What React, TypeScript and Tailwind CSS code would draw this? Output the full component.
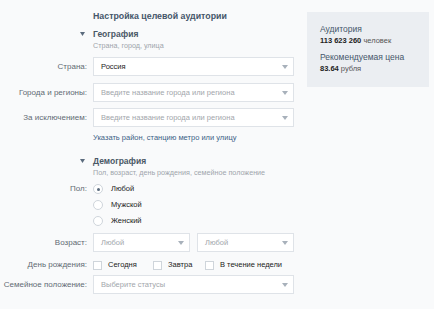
import React from "react";

const font = { fontFamily: '"Liberation Sans", Arial, sans-serif' };

const Caret = () => (
  <svg width="6" height="4" viewBox="0 0 6 4" className="shrink-0">
    <path d="M0 0 L6 0 L3 4 Z" fill="#a8b1bb" />
  </svg>
);

const Select = ({ text, placeholder = false, width = "w-[201px]" }: { text: string; placeholder?: boolean; width?: string }) => (
  <div className={`${width} h-[19px] flex items-center justify-between bg-white border border-[#dfe3e8] pl-[7px] pr-[5px]`}>
    <span className={`text-[7.5px] ${placeholder ? "text-[#a2a6ab]" : "text-[#222]"}`}>{text}</span>
    <Caret />
  </div>
);

const Row = ({ label, children, className = "" }: { label: string; children: React.ReactNode; className?: string }) => (
  <div className={`flex items-center ${className}`}>
    <div className="w-[88px] pr-[1px] text-right text-[8px] text-[#626a73]">{label}</div>
    <div className="ml-[5px] flex items-center">{children}</div>
  </div>
);

const Section = ({ title, sub }: { title: string; sub: string }) => (
  <div className="ml-[80px]">
    <div className="flex items-center h-[12px]">
      <svg width="5" height="4" viewBox="0 0 5 4" className="mr-[8px]">
        <path d="M0 0 L5 0 L2.5 4 Z" fill="#5b6b7d" />
      </svg>
      <span className="text-[8.5px] font-bold text-[#4a5866]">{title}</span>
    </div>
    <div className="ml-[13px] text-[7.2px] text-[#a0a5ab] leading-[12px]">{sub}</div>
  </div>
);

const Radio = ({ label, checked = false }: { label: string; checked?: boolean }) => (
  <div className="flex items-center h-[16px]">
    <div className="w-[10px] h-[10px] rounded-full border border-[#cfd5db] bg-white flex items-center justify-center">
      {checked && <div className="w-[3px] h-[3px] rounded-full bg-[#5b6b7d]" />}
    </div>
    <span className="ml-[8px] text-[7.5px] text-[#222]">{label}</span>
  </div>
);

const Check = ({ label }: { label: string }) => (
  <div className="flex items-center">
    <div className="w-[9px] h-[9px] border border-[#cfd5db] bg-white" />
    <span className="ml-[6px] text-[7.5px] text-[#222]">{label}</span>
  </div>
);

export default function App() {
  return (
    <div style={font} className="w-[434px] h-[309px] bg-[#f9fafb] overflow-hidden flex">
      <div className="w-[300px] flex flex-col">
        <div className="ml-[93px] mt-[11px] h-[12px] flex items-center text-[8.8px] font-bold text-[#45566a]">
          Настройка целевой аудитории
        </div>
        <div className="mt-[5px]">
          <Section title="География" sub="Страна, город, улица" />
        </div>
        <Row label="Страна:" className="mt-[5px]">
          <Select text="Россия" />
        </Row>
        <Row label="Города и регионы:" className="mt-[7px]">
          <Select text="Введите название города или региона" placeholder />
        </Row>
        <Row label="За исключением:" className="mt-[6px]">
          <Select text="Введите название города или региона" placeholder />
        </Row>
        <div className="ml-[93px] mt-[5px] text-[7.5px] text-[#3b5f86] leading-[12px]">
          Указать район, станцию метро или улицу
        </div>
        <div className="mt-[11px]">
          <Section title="Демография" sub="Пол, возраст, день рождения, семейное положение" />
        </div>
        <Row label="Пол:" className="mt-[2px]">
          <Radio label="Любой" checked />
        </Row>
        <div className="ml-[93px]">
          <Radio label="Мужской" />
          <Radio label="Женский" />
        </div>
        <Row label="Возраст:" className="mt-[4px]">
          <Select text="Любой" placeholder width="w-[97px]" />
          <div className="ml-[7px]">
            <Select text="Любой" placeholder width="w-[97px]" />
          </div>
        </Row>
        <Row label="День рождения:" className="mt-[7px]">
          <div className="w-[60px]"><Check label="Сегодня" /></div>
          <div className="w-[52px]"><Check label="Завтра" /></div>
          <Check label="В течение недели" />
        </Row>
        <Row label="Семейное положение:" className="mt-[4px]">
          <Select text="Выберите статусы" placeholder />
        </Row>
      </div>
      <div className="ml-[7px] mt-[12px] w-[122px] h-[75px] bg-[#ebeef2] pl-[13px] pt-[12px] flex flex-col">
        <div className="text-[8.5px] text-[#45566a] leading-[11px]">Аудитория</div>
        <div className="text-[7.5px] text-[#555] leading-[11px]">
          <span className="font-bold text-[#222]">113 623 260</span> человек
        </div>
        <div className="mt-[6px] text-[8.5px] text-[#45566a] leading-[11px]">Рекомендуемая цена</div>
        <div className="text-[7.5px] text-[#555] leading-[11px]">
          <span className="font-bold text-[#222]">83.64</span> рубля
        </div>
      </div>
    </div>
  );
}
